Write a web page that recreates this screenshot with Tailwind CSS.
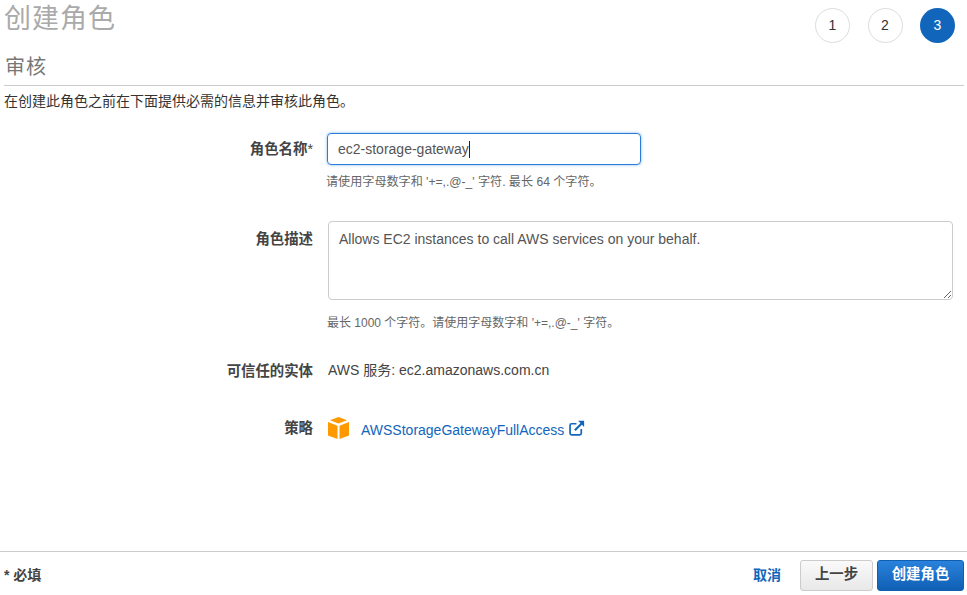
<!DOCTYPE html>
<html lang="zh-CN">
<head>
  <meta charset="UTF-8" />
  <title>创建角色</title>
  <script src="https://cdn.jsdelivr.net/npm/@tailwindcss/browser@4"></script>
</head>
<body class="bg-white text-[#444] font-['Liberation_Sans','Noto_Sans_CJK_SC',sans-serif] w-[967px] h-[595px] overflow-hidden flex flex-col">

  <!-- Header -->
  <header class="h-[86px] shrink-0 ml-[4px] mr-[3px] border-b border-[#ccc] flex justify-between">
    <div>
      <h1 class="text-[27px] leading-[36px] text-[#aaa] tracking-[1px] pt-[1px]">创建角色</h1>
      <h2 class="text-[20px] leading-[28px] text-[#777] pl-[1px] mt-[16px] tracking-[1px]">审核</h2>
    </div>
    <div class="flex gap-[17.5px] pt-[8px] pr-[9px]">
      <span class="w-[35px] h-[35px] rounded-full border border-[#ddd] flex items-center justify-center text-[14px] text-[#333]">1</span>
      <span class="w-[35px] h-[35px] rounded-full border border-[#ddd] flex items-center justify-center text-[14px] text-[#333]">2</span>
      <span class="w-[35px] h-[35px] rounded-full bg-[#1166bb] flex items-center justify-center text-[14px] text-white">3</span>
    </div>
  </header>

  <!-- Main -->
  <main class="flex-1 pl-[4px]">
    <p class="text-[14px] leading-[20px] text-[#333] mt-[5px]">在创建此角色之前在下面提供必需的信息并审核此角色。</p>

    <div class="grid grid-cols-[309px_1fr] gap-x-[14px] mt-[22px]">
      <label class="text-right text-[14.4px] font-bold leading-[32px]">角色名称<span class="font-normal">*</span></label>
      <div>
        <div class="w-[314px] h-[32px] border border-[#2b7bd8] rounded-[4px] shadow-[0_0_3px_#7fb2ea] flex items-center pl-[10px] text-[14px] text-[#555]">
          ec2-storage-gateway<span class="w-px h-[17px] bg-[#222]"></span>
        </div>
        <p class="text-[12.1px] leading-[16px] text-[#666] mt-[9px] -ml-[1px]">请使用字母数字和 '+=,.@-_' 字符. 最长 64 个字符。</p>
      </div>

      <label class="text-right text-[14.4px] font-bold leading-[34px] mt-[31px] pt-[1px]">角色描述</label>
      <div class="mt-[31px] pl-[1px]">
        <textarea class="block w-[625px] h-[79px] border border-[#ccc] rounded-[4px] px-[10px] py-[8px] text-[14px] leading-[18px] text-[#555] outline-none">Allows EC2 instances to call AWS services on your behalf.</textarea>
        <p class="text-[12px] leading-[16px] text-[#666] mt-[15px] -ml-[1px]">最长 1000 个字符。请使用字母数字和 '+=,.@-_' 字符。</p>
      </div>

      <span class="text-right text-[14.4px] font-bold leading-[20px] mt-[30px]">可信任的实体</span>
      <span class="text-[14px] leading-[20px] mt-[29px] pl-[1px]">AWS 服务: ec2.amazonaws.com.cn</span>

      <span class="text-right text-[14.4px] font-bold leading-[20px] mt-[37px]">策略</span>
      <div class="mt-[37px] pl-[1px] flex items-start h-[24px] text-[14px] text-[#1166bb]">
        <svg class="w-[21px] h-[22px] -mt-[1px]" viewBox="0 0 21 22">
          <path d="M10.500 0 L19 3.200 L10.500 6.500 L2 3.200 Z" fill="#ff9900"/>
          <path d="M0 5 L9.500 8.800 V22 L0 18.500 Z" fill="#ff9900"/>
          <path d="M21 5 L11.500 8.800 V22 L21 18.500 Z" fill="#ff9900"/>
        </svg>
        <a class="ml-[12px] mt-[2px]">AWSStorageGatewayFullAccess</a>
        <svg class="w-[16px] h-[16px] ml-[5px] mt-[2px]" viewBox="0 0 15 15" fill="none" stroke="#1166bb" stroke-width="1.6">
          <path d="M11.500 8.500 V12.500 Q11.500 14 10 14 H2.500 Q1 14 1 12.500 V5 Q1 3.500 2.500 3.500 H7"/>
          <path d="M5.500 9.500 L13 2" stroke-width="2"/>
          <path d="M8.500 0.800 H14.200 V6.500 Z" fill="#1166bb" stroke="none"/>
        </svg>
      </div>
    </div>
  </main>

  <!-- Footer -->
  <footer class="h-[44px] shrink-0 border-t border-[#ccc] flex items-center justify-between pl-[4px] pr-[3px] pt-[3px]">
    <span class="text-[14px] font-bold">* 必填</span>
    <div class="flex items-center">
      <a class="text-[14px] font-bold text-[#1166bb] mr-[19px]">取消</a>
      <button class="w-[73px] h-[31px] border border-[#ccc] rounded-[3px] bg-linear-to-b from-[#fafafa] to-[#e8e8e8] text-[14.4px] font-bold text-[#444]">上一步</button>
      <button class="w-[87px] h-[31px] ml-[4px] border border-[#0f5fae] rounded-[3px] bg-linear-to-b from-[#2a82dc] to-[#0f60b5] text-[14.4px] font-bold text-white">创建角色</button>
    </div>
  </footer>
</body>
</html>
